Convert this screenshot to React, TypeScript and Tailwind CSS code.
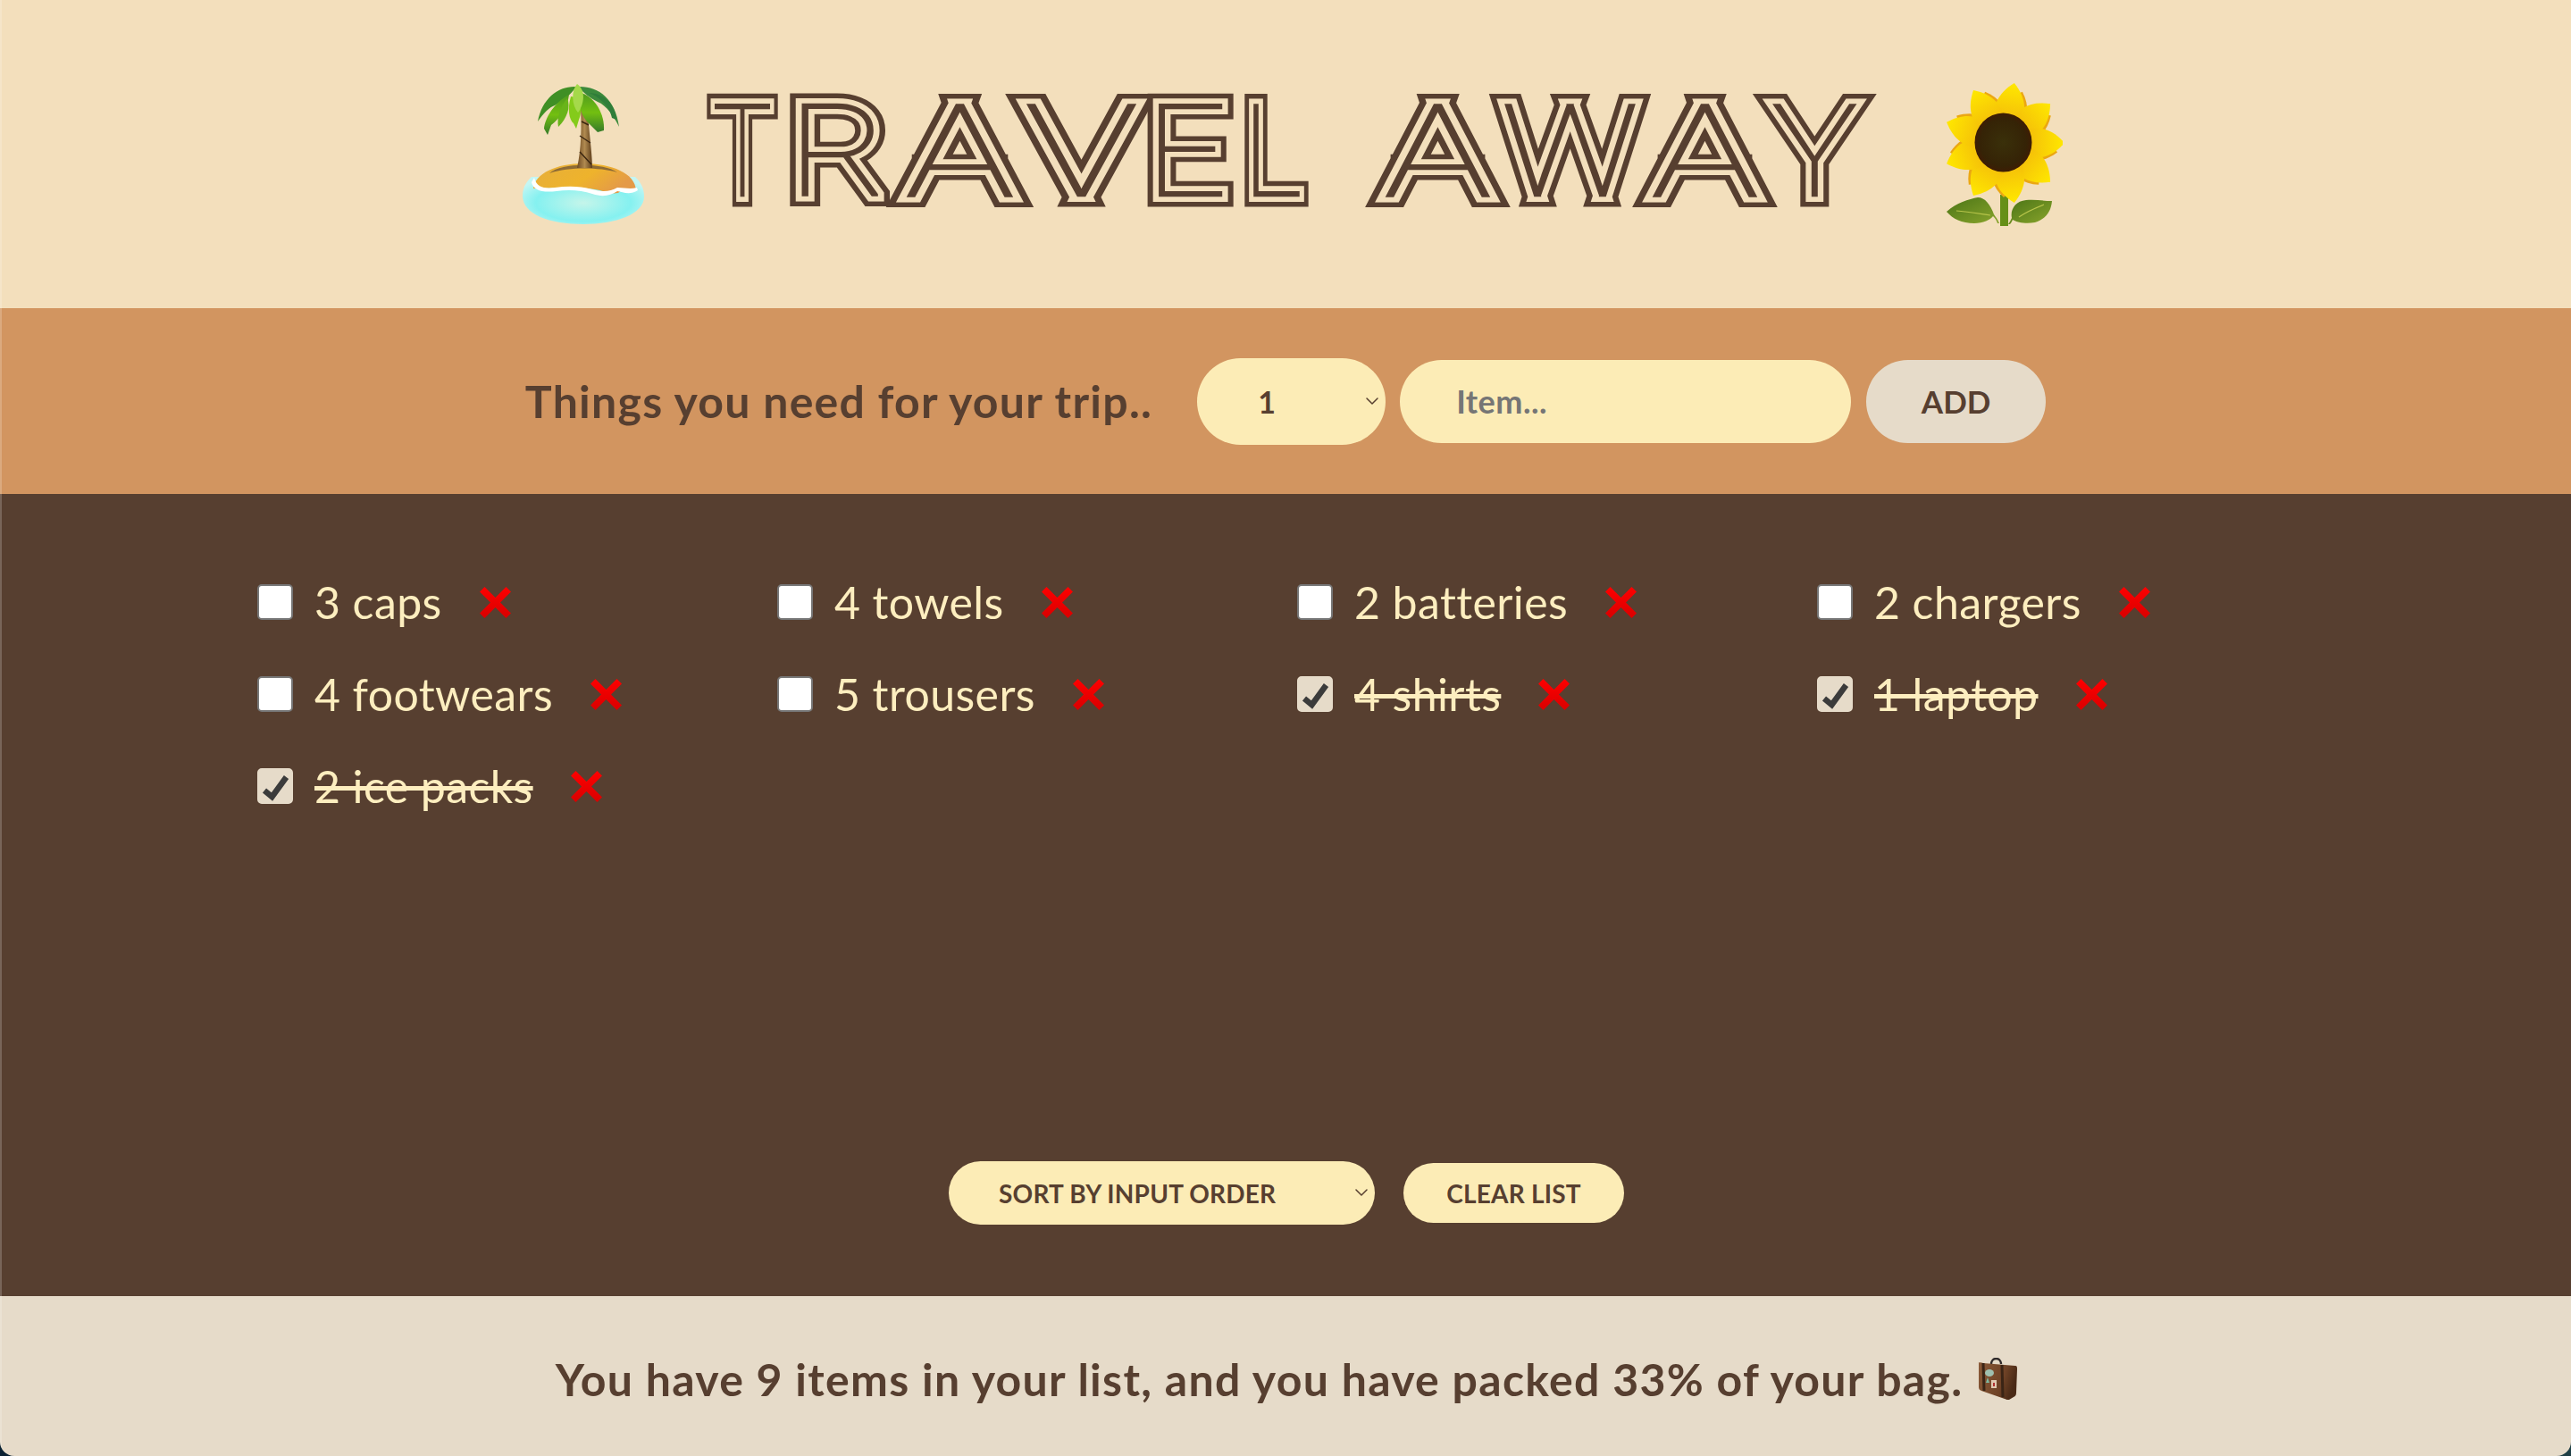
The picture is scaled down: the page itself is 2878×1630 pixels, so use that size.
import { ChevronDown } from 'lucide-react'

const items = [
  { text: '3 caps', packed: false },
  { text: '4 towels', packed: false },
  { text: '2 batteries', packed: false },
  { text: '2 chargers', packed: false },
  { text: '4 footwears', packed: false },
  { text: '5 trousers', packed: false },
  { text: '4 shirts', packed: true },
  { text: '1 laptop', packed: true },
  { text: '2 ice packs', packed: true },
]

// x and stretched width of each title glyph
const titleLetters = [
  { ch: 'T', x: 18, len: 66 },
  { ch: 'R', x: 103, len: 110 },
  { ch: 'A', x: 234, len: 121 },
  { ch: 'V', x: 368, len: 125 },
  { ch: 'E', x: 503, len: 90 },
  { ch: 'L', x: 612, len: 65 },
  { ch: ' ', x: 700, len: 30 },
  { ch: 'A', x: 770, len: 119 },
  { ch: 'W', x: 901, len: 153 },
  { ch: 'A', x: 1069, len: 119 },
  { ch: 'Y', x: 1204, len: 95 },
]

function PalmIsland() {
  return (
    <svg width="137" height="158" viewBox="0 0 137 158" className="shrink-0">
      <defs>
        <radialGradient id="water" cx="0.5" cy="0.55" r="0.6">
          <stop offset="0" stopColor="#c5f5ea" />
          <stop offset="0.65" stopColor="#85f1f0" />
          <stop offset="1" stopColor="#c4f6f4" />
        </radialGradient>
        <linearGradient id="sand" x1="0" y1="0" x2="1" y2="0.4">
          <stop offset="0" stopColor="#e6ae3c" />
          <stop offset="0.6" stopColor="#eeb32c" />
          <stop offset="1" stopColor="#e49a48" />
        </linearGradient>
        <linearGradient id="trunk" x1="0" y1="0" x2="1" y2="0">
          <stop offset="0" stopColor="#6e4a22" />
          <stop offset="0.5" stopColor="#b08a50" />
          <stop offset="1" stopColor="#5d3d1b" />
        </linearGradient>
        <linearGradient id="frond" x1="0" y1="0" x2="0" y2="1">
          <stop offset="0" stopColor="#4f9a1e" />
          <stop offset="0.5" stopColor="#73bf10" />
          <stop offset="1" stopColor="#357a2a" />
        </linearGradient>
      </defs>
      <path d="M0 125 C0 114 6 108 10 104 L126 104 C132 110 136 116 136 126 C136 146 104 157 68 157 C30 157 0 146 0 125Z" fill="url(#water)" />
      <path d="M12 117 C14 100 38 89 68 89 C100 89 126 100 127 119 C118 116 112 117 107 122 C96 124 90 118 72 117 C50 114 30 118 12 117Z" fill="url(#sand)" />
      <path d="M30 100 C44 88 90 88 106 99 C84 93 52 93 30 100Z" fill="#8d6a35" />
      <path d="M10 110 C12 119 22 122 38 120 C52 118 66 119 78 123 C90 127 98 125 106 120 C112 121 120 125 129 119 L128 116 C120 118 114 116 106 116 C98 121 88 121 78 118 C64 114 50 114 36 116 C26 117 16 117 13 105Z" fill="#ffffff" />
      <path d="M65 28 L73 28 C73 45 78 75 78 94 L61 94 C66 72 66 45 65 28Z" fill="url(#trunk)" />
      <path d="M66 42 L74 46 M64 58 L76 66 M64 76 L77 90 M67 32 L73 36" stroke="#3a2510" strokeWidth="1.4" fill="none" />
      <path d="M60 3 C40 2 22 16 17 42 C24 32 30 26 36 24 C46 18 54 12 60 3Z" fill="#3f8f25" />
      <path d="M62 3 C84 2 104 16 108 48 C102 36 94 24 84 20 C76 16 68 10 62 3Z" fill="#3c8a3c" />
      <path d="M52 12 C36 20 25 38 24 50 L28 57 L32 46 C42 38 50 28 52 12Z" fill="url(#frond)" />
      <path d="M50 16 C42 26 38 38 40 48 C50 38 54 26 50 16Z" fill="#69b41a" />
      <path d="M54 14 C50 28 52 40 57 44 L60 50 L63 40 C68 30 64 14 54 14Z" fill="#84cb1a" />
      <path d="M66 10 C62 22 64 32 72 42 L84 54 L91 52 C92 34 82 16 66 10Z" fill="url(#frond)" />
      <path d="M74 10 C86 14 98 26 100 38 L105 40 C104 24 92 10 74 10Z" fill="#2f7d3a" />
      <path d="M61 0 C54 8 55 24 62 32 C68 24 72 8 61 0Z" fill="#a5d94a" />
    </svg>
  )
}

function Sunflower() {
  const back = [20, 60, 100, 140, 180, 220, 260, 300, 340]
  const front = [10, 50, 90, 130, 170, 210, 250, 290, 330]
  return (
    <svg width="131" height="160" viewBox="0 0 131 160" className="shrink-0">
      <defs>
        <linearGradient id="petal" x1="0" y1="0" x2="0" y2="1">
          <stop offset="0" stopColor="#ffe800" />
          <stop offset="1" stopColor="#f3b90a" />
        </linearGradient>
        <linearGradient id="leaf" x1="0" y1="0" x2="1" y2="1">
          <stop offset="0" stopColor="#4a7416" />
          <stop offset="1" stopColor="#8aa52c" />
        </linearGradient>
        <radialGradient id="disc" cx="0.5" cy="0.5" r="0.5">
          <stop offset="0" stopColor="#3a300a" />
          <stop offset="0.8" stopColor="#352306" />
          <stop offset="1" stopColor="#3e1c04" />
        </radialGradient>
      </defs>
      <rect x="61" y="125" width="9" height="35" fill="#668f17" />
      <path d="M60 157 C58 152 56 150 54 147 C50 136 44 128 36 128 C26 130 12 134 1 144 C8 152 18 157 32 157 C42 157 50 153 53 149 C56 152 57 154 58 157Z" fill="url(#leaf)" />
      <path d="M70 158 C72 155 73 153 74 151 C72 142 78 132 90 131 C100 130 110 132 119 132 C118 144 112 152 100 156 C90 158 80 156 75 153 C74 155 73 157 72 158Z" fill="url(#leaf)" />
      <path d="M12 143 C24 144 36 146 50 148 M82 150 C90 144 100 140 110 136" stroke="#b7c44a" strokeWidth="1.2" fill="none" />
      <g>
        {back.map((a) => (
          <path
            key={`b${a}`}
            transform={`rotate(${a} 65 67)`}
            d="M65 6 C52 18 48 32 54 46 L76 46 C82 32 78 18 65 6Z"
            fill="#eba712"
          />
        ))}
        {front.map((a) => (
          <path
            key={a}
            transform={`rotate(${a} 65 67)`}
            d="M65 -1 C48 14 45 30 52 46 L78 46 C85 30 82 14 65 -1Z"
            fill="url(#petal)"
          />
        ))}
      </g>
      <ellipse cx="64.5" cy="66.5" rx="32" ry="33" fill="url(#disc)" />
    </svg>
  )
}

function Luggage() {
  return (
    <svg width="46" height="48" viewBox="0 0 46 48" className="shrink-0 ml-[15px]">
      <defs>
        <linearGradient id="case" x1="0" y1="0" x2="1" y2="0.3">
          <stop offset="0" stopColor="#8a5a38" />
          <stop offset="0.7" stopColor="#6e4226" />
          <stop offset="1" stopColor="#4a2a16" />
        </linearGradient>
      </defs>
      <path d="M17 7 C17 -1 28 -1 28 7" stroke="#2f2a2a" strokeWidth="2.4" fill="none" />
      <path d="M3 6 C2 5 6 5 8 6 L44 9 C46 9 46 11 46 13 L45 39 C45 42 44 43 42 44 L37 47 C35 47 34 47 32 46 L6 37 C4 36 3 35 3 33Z" fill="url(#case)" />
      <path d="M8 6 L9 37 M29 8 L30 44" stroke="#3a2415" strokeWidth="3" fill="none" />
      <ellipse cx="15" cy="17" rx="5" ry="4" fill="#9fc0b0" />
      <rect x="17" y="25" width="6" height="9" fill="#e0c8b0" />
      <rect x="19" y="28" width="2" height="4" fill="#b03030" />
      <path d="M11 28 L13 22 L15 28Z" fill="#7fb8a0" />
    </svg>
  )
}

function RemoveIcon() {
  return (
    <svg width="35" height="35" viewBox="0 0 35 35" className="shrink-0">
      <defs>
        <linearGradient id="cross" x1="0" y1="0" x2="0" y2="1">
          <stop offset="0" stopColor="#ff0000" />
          <stop offset="1" stopColor="#d90000" />
        </linearGradient>
      </defs>
      <path d="M5.5 0 L17.5 12 L29.5 0 L35 5.5 L23 17.5 L35 29.5 L29.5 35 L17.5 23 L5.5 35 L0 29.5 L12 17.5 L0 5.5Z" fill="url(#cross)" />
    </svg>
  )
}

function Title() {
  return (
    <svg width="1330" height="161" viewBox="0 0 1330 161" className="shrink-0 font-['Roboto',sans-serif] font-thin text-[143px]">
      <g fill="#573f30" stroke="#573f30" strokeWidth="25" strokeMiterlimit="10">
        <use href="#title-text" />
      </g>
      <g fill="#f3dfbc" stroke="#f3dfbc" strokeWidth="14" strokeMiterlimit="10">
        <use href="#title-text" />
      </g>
      <g fill="#573f30" stroke="#573f30" strokeWidth="2.5">
        <text id="title-text" y="127" xmlSpace="preserve">
          {titleLetters.map((l, i) => (
            <tspan key={i} x={l.x} textLength={l.len} lengthAdjust="spacingAndGlyphs">{l.ch}</tspan>
          ))}
        </text>
      </g>
    </svg>
  )
}

function Item({ text, packed }: { text: string; packed: boolean }) {
  return (
    <li className="flex items-center">
      <span className="relative flex w-[40px] h-[40px] shrink-0">
        <input
          type="checkbox"
          defaultChecked={packed}
          className="appearance-none w-full h-full rounded-[5px] border-2 border-[#767676] bg-white checked:border-[#e6dbc9] checked:bg-[#e6dbc9]"
        />
        {packed && (
          <svg viewBox="0 0 40 40" className="absolute inset-0 w-[40px] h-[40px]">
            <path d="M8 25 L16.5 32 L32.5 10" stroke="#3b3b3b" strokeWidth="6.5" fill="none" />
          </svg>
        )}
      </span>
      <span className={`ml-[24px] mr-[42px] text-[50px] tracking-[0.4px] leading-[60px] text-[#fdeebf] ${packed ? 'line-through' : ''}`}>
        {text}
      </span>
      <RemoveIcon />
    </li>
  )
}

export default function App() {
  return (
    <div className="w-[2878px] h-[1630px] bg-gradient-to-r from-[#0b2233] to-[#1f3f45] font-['Lato',sans-serif]">
      <div className="flex flex-col h-full overflow-hidden rounded-b-[16px] text-[#573f30]">
        <header className="h-[345px] shrink-0 flex items-center justify-center pl-[14px] gap-[58px] border-l-2 border-white/20 bg-[#f3dfbc]">
          <PalmIsland />
          <div className="flex items-center gap-[68px]">
            <Title />
            <Sunflower />
          </div>
        </header>

        <form className="h-[208px] shrink-0 flex items-center justify-center pr-[2px] border-l-2 border-white/20 bg-[#d29560]">
          <h3 className="mr-[50px] text-[50px] tracking-[1.25px] font-bold">Things you need for your trip..</h3>
          <div className="relative mr-[16px]">
            <select className="block appearance-none w-[211px] h-[97px] pl-[68px] rounded-full bg-[#fcecb6] text-[34px] font-bold outline-none">
              <option>1</option>
            </select>
            <ChevronDown strokeWidth={1.5} className="absolute right-[3px] top-[36px] w-[24px] h-[24px]" />
          </div>
          <input
            placeholder="Item..."
            className="w-[505px] h-[93px] px-[63px] rounded-full bg-[#fcecb6] text-[36px] tracking-[0.5px] font-bold placeholder:text-[#757575] outline-none"
          />
          <button type="button" className="ml-[17px] w-[201px] h-[93px] rounded-full bg-[#e6dbc9] text-[35px] font-bold">
            ADD
          </button>
        </form>

        <section className="flex-1 flex flex-col justify-between pb-[80px] border-l-2 border-white/20 bg-[#573f30]">
          <ul className="grid grid-cols-[repeat(4,582px)] auto-rows-[60px] gap-y-[43px] pt-[91px] pl-[286px]">
            {items.map((item) => (
              <Item key={item.text} text={item.text} packed={item.packed} />
            ))}
          </ul>
          <div className="flex items-center justify-center gap-[32px]">
            <div className="relative">
              <select className="block appearance-none w-[477px] h-[71px] pl-[56px] rounded-full bg-[#fcecb6] text-[28px] tracking-[0.2px] font-bold uppercase outline-none">
                <option>Sort by input order</option>
              </select>
              <ChevronDown strokeWidth={1.5} className="absolute right-[3px] top-[23px] w-[24px] h-[24px]" />
            </div>
            <button type="button" className="w-[247px] h-[67px] rounded-full bg-[#fcecb6] text-[28px] tracking-[0.2px] font-bold uppercase">
              Clear list
            </button>
          </div>
        </section>

        <footer className="h-[179px] shrink-0 flex items-center justify-center pt-[7px] border-l-2 border-white/20 bg-[#e6dbc9] text-[50px] tracking-[1.3px] font-bold">
          <span>You have 9 items in your list, and you have packed 33% of your bag.</span>
          <Luggage />
        </footer>
      </div>
    </div>
  )
}
